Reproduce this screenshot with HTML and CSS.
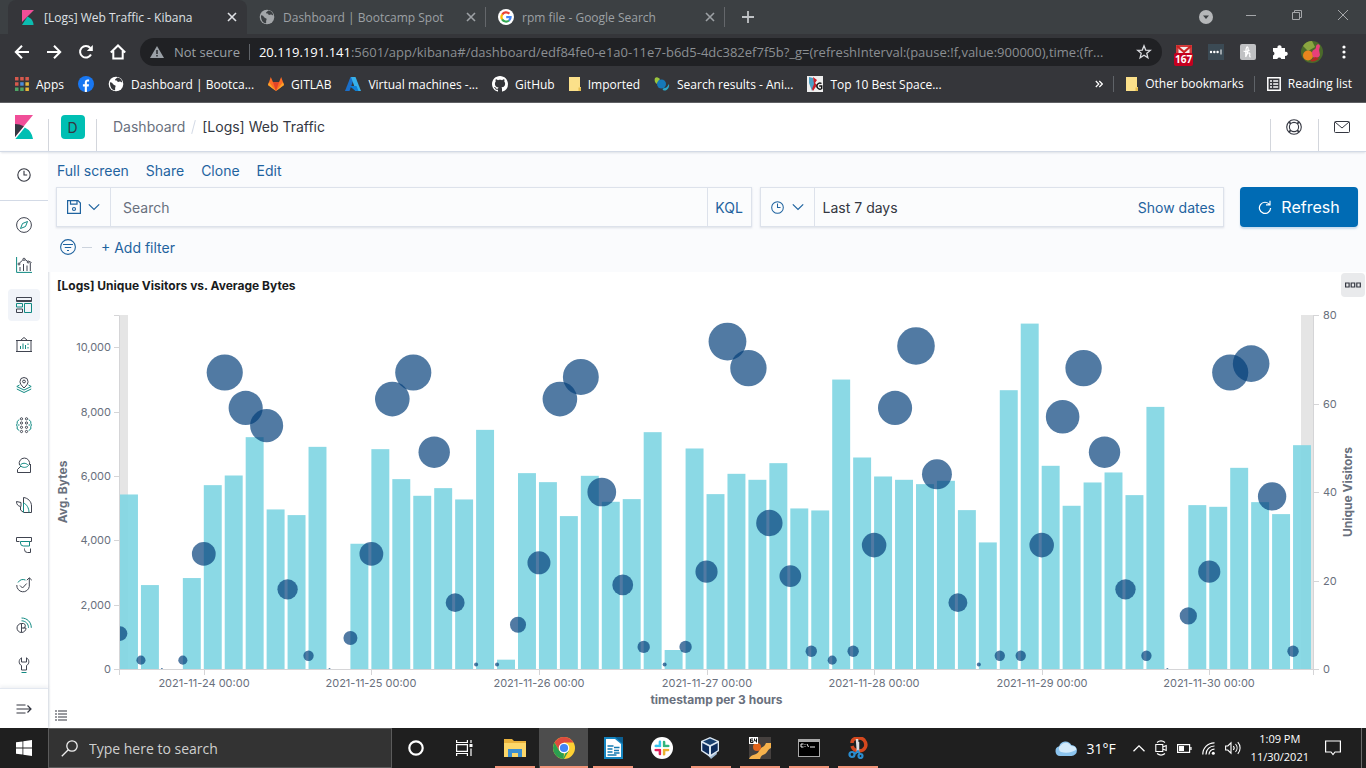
FILE: index.html
```html
<!DOCTYPE html>
<html lang="en">
<head>
<meta charset="utf-8">
<title>[Logs] Web Traffic - Kibana</title>
<link rel="stylesheet" href="styles.css">
</head>
<body>
<svg class="defs" aria-hidden="true">
  <symbol id="i-globe" viewBox="0 0 16 16"><circle cx="8" cy="8" r="7.3" fill="currentColor"/><path class="cut" d="M2 6.2c1.8.2 2.6.8 3 1.8.4 1 1.6 1 2.3 1.6.8.8-.2 1.700-.2 3 0 .8.3 1.300-.3 1.700C3.500 13.700 1.800 10.500 2 6.200zM9.300 1.600c-.5 1-1.800 1-2.200 2-.3.9.6 1.100 1.500 1 .7 0 .5 1.200 1.300 1.300 1 .1 1.300-.6 2.300-.4.9.2 1.200.9 1.900 1.100.2-2.500-2-4.800-4.800-5z"/></symbol>
  <symbol id="i-close" viewBox="0 0 10 10"><path d="M1 1l8 8M9 1L1 9" stroke="currentColor" stroke-width="1.600" fill="none"/></symbol>
  <symbol id="i-folder" viewBox="0 0 12 14"><path d="M0 0h11v10h1v4H0z" fill="#fbe08a"/><path d="M9.500 14v-3.500H12V14z" fill="#e5bd4f"/></symbol>
  <symbol id="i-chev" viewBox="0 0 12 8"><path d="M.8 1.300L6 6.500l5.200-5.200" fill="none" stroke="currentColor" stroke-width="1.200"/></symbol>
  <symbol id="i-clock" viewBox="0 0 16 16"><g fill="none" stroke="currentColor" stroke-width="1.100"><circle cx="8" cy="8" r="6.200"/><path d="M8 3.800V8h3.200"/></g></symbol>
</svg>

<header class="browser">
  <div class="tabs">
    <div class="tab tab-on">
      <svg class="fav" viewBox="0 0 16 16"><path d="M2 1h12L2 13z" fill="#f04e98"/><path d="M2 16l5.500-8.500C11 9 13.500 12 13.500 16z" fill="#0cbcb0"/></svg>
      <button class="tab-name">[Logs] Web Traffic - Kibana</button>
      <button class="tab-x" aria-label="Close tab"><svg width="10" height="10"><use href="#i-close"/></svg></button>
    </div>
    <div class="tab">
      <svg class="fav strip-globe" width="16" height="16"><use href="#i-globe"/></svg>
      <button class="tab-name">Dashboard | Bootcamp Spot</button>
      <button class="tab-x" aria-label="Close tab"><svg width="10" height="10"><use href="#i-close"/></svg></button>
    </div>
    <div class="tab">
      <svg class="fav" viewBox="0 0 16 16"><circle cx="8" cy="8" r="8" fill="#fff"/><g fill="none" stroke-width="2.200"><path d="M4.200 5.600A4.600 4.600 0 0 1 11.300 4.700" stroke="#ea4335"/><path d="M4.200 10.500a4.600 4.600 0 0 1 0-5" stroke="#fbbc05"/><path d="M11 11.500a4.600 4.600 0 0 1-6.900-1.100" stroke="#34a853"/><path d="M8.200 8.100h4.400c0 1.500-.6 2.700-1.600 3.500" stroke="#4285f4"/></g></svg>
      <button class="tab-name">rpm file - Google Search</button>
      <button class="tab-x" aria-label="Close tab"><svg width="10" height="10"><use href="#i-close"/></svg></button>
    </div>
    <button class="tab-new" aria-label="New tab"><svg width="12" height="12" viewBox="0 0 12 12"><path d="M6 0v12M0 6h12" stroke="currentColor" stroke-width="1.800"/></svg></button>
    <div class="win">
      <button aria-label="Tab search"><svg width="14" height="14" viewBox="0 0 14 14"><circle cx="7" cy="7" r="7" fill="#b5b7b9"/><path d="M4 5.500h6L7 9z" fill="#3c4043"/></svg></button>
      <button class="win-b" aria-label="Minimize"><svg width="10" height="10" viewBox="0 0 10 10"><path d="M0 5.500h10" stroke="currentColor"/></svg></button>
      <button class="win-b" aria-label="Restore"><svg width="10" height="10" viewBox="0 0 10 10"><path d="M.5 2.500h7v7h-7zM2.500 2.500v-2h7v7h-2" fill="none" stroke="currentColor"/></svg></button>
      <button class="win-b" aria-label="Close"><svg width="10" height="10" viewBox="0 0 10 10"><path d="M0 0l10 10M10 0L0 10" stroke="currentColor"/></svg></button>
    </div>
  </div>

  <div class="toolbar">
    <div class="nav-btns">
      <button aria-label="Back"><svg width="16" height="16" viewBox="0 0 16 16"><path d="M15 8H2M8 1.800L1.800 8 8 14.200" fill="none" stroke="currentColor" stroke-width="2"/></svg></button>
      <button aria-label="Forward"><svg width="16" height="16" viewBox="0 0 16 16"><path d="M1 8h13M8 1.800L14.200 8 8 14.200" fill="none" stroke="currentColor" stroke-width="2"/></svg></button>
      <button aria-label="Reload"><svg width="16" height="16" viewBox="0 0 16 16"><path d="M13 10.500A5.800 5.800 0 1 1 12.300 4" fill="none" stroke="currentColor" stroke-width="2"/><path d="M14.800 1v6H8.800z" fill="currentColor"/></svg></button>
      <button aria-label="Home"><svg width="16" height="16" viewBox="0 0 16 16"><path d="M.8 8.500L8 1.500l7.200 7M3.300 7v7.500h9.400V7" fill="none" stroke="currentColor" stroke-width="2"/></svg></button>
    </div>
    <div class="omni">
      <svg width="14" height="12" viewBox="0 0 14 12"><path d="M7 0l7 12H0z" fill="#9aa0a6"/><path d="M7 4v4M7 9v1.500" stroke="#202124" stroke-width="1.400"/></svg>
      <span class="omni-sec">Not secure</span>
      <label class="omni-host" for="url">20.119.191.141</label>
      <input id="url" class="omni-url" value=":5601/app/kibana#/dashboard/edf84fe0-e1a0-11e7-b6d5-4dc382ef7f5b?_g=(refreshInterval:(pause:!f,value:900000),time:(fr...">
      <button aria-label="Bookmark this page"><svg width="16" height="16" viewBox="0 0 16 16"><path d="M8 1.800l1.700 4.300 4.600.3-3.500 2.900 1.100 4.500L8 11.300l-3.900 2.500 1.100-4.500L1.700 6.400l4.600-.3z" fill="none" stroke="#dadce0" stroke-width="1.300"/></svg></button>
    </div>
    <div class="exts">
      <button class="mail" aria-label="Mail checker"><svg width="16" height="16" viewBox="0 0 16 16"><path d="M0 1h16v13H0z" fill="#d23b3b"/><path d="M2.500 3h11v10h-11z" fill="#f3eeee"/><path d="M1 2l7 6 7-6" fill="none" stroke="#c22" stroke-width="2.200"/></svg><span class="mail-n">167</span></button>
      <button aria-label="Password manager"><svg width="16" height="16" viewBox="0 0 16 16"><path d="M0 0h16v16H0z" fill="#3b4a54"/><g fill="#fff"><circle cx="3" cy="8" r="1.200"/><circle cx="6.300" cy="8" r="1.200"/><circle cx="9.600" cy="8" r="1.200"/><path d="M12.500 5.500h1v5h-1z"/></g></svg></button>
      <button aria-label="Honey"><svg width="16" height="16" viewBox="0 0 16 16"><rect width="16" height="16" rx="2" fill="#c0c1c3"/><path d="M5.500 13c2-3 3.500-9.500 2-10S5.500 8 5.800 13c.5-3 3.400-5.500 4-3.500.3 1.300-.9 3.500.9 3.300M3.500 7c2 1 4.500.5 6-1" fill="none" stroke="#fff" stroke-width="1.200"/></svg></button>
      <button aria-label="Extensions"><svg width="16" height="16" viewBox="0 0 16 16"><path d="M1 4h4.500a2.100 2.100 0 1 1 4 0H13v3.800a2.100 2.100 0 1 1 0 4V15H9.300a2.100 2.100 0 0 0-4 0H1v-3.600a2.100 2.100 0 0 0 0-4z" fill="#fff"/></svg></button>
      <button aria-label="Profile"><svg width="22" height="22" viewBox="0 0 22 22"><circle cx="11" cy="11" r="11" fill="#4b6a2a"/><path d="M2 5a11 11 0 0 1 9-5l3 6-7 4z" fill="#8ba540"/><circle cx="7" cy="14.500" r="5" fill="#e8851e"/><path d="M11 12c0-4 4-3 4-6s3-4 4-1l-1 4 1 5c-1 3-5 4-7 2z" fill="#e8407a"/><path d="M9 20c3 1 7 0 9-3l-4-1z" fill="#b52a22"/></svg></button>
      <button aria-label="Menu"><svg width="4" height="16" viewBox="0 0 4 16"><g fill="#fff"><circle cx="2" cy="3" r="1.600"/><circle cx="2" cy="8" r="1.600"/><circle cx="2" cy="13" r="1.600"/></g></svg></button>
    </div>
  </div>

  <nav class="marks">
    <a href="#"><svg width="14" height="14" viewBox="0 0 14 14"><g><path d="M0 0h3.500v3.500H0zM5.200 0h3.500v3.500H5.200zM10.400 0h3.500v3.500h-3.500zM0 5.200h3.500v3.500H0z" fill="#d7594d"/><path d="M5.200 5.200h3.500v3.500H5.200z" fill="#4c8bd8"/><path d="M0 10.400h3.500v3.500H0zM5.200 10.400h3.500v3.500H5.200z" fill="#4fa566"/><path d="M10.400 5.200h3.500v3.500h-3.500zM10.400 10.400h3.500v3.500h-3.500z" fill="#e8b53a"/></g></svg>Apps</a>
    <a href="#" aria-label="Facebook"><svg width="16" height="16" viewBox="0 0 16 16"><circle cx="8" cy="8" r="8" fill="#1877f2"/><path d="M6.800 16v-5.500H4.900V8.200h1.900V6.500c0-2 1.200-3 2.900-3 .8 0 1.400.1 1.400.1v1.900h-1c-1 0-1.200.6-1.200 1.200v1.500H11l-.3 2.300H8.900V16z" fill="#fff"/></svg></a>
    <a href="#"><svg class="bar-globe" width="16" height="16"><use href="#i-globe"/></svg>Dashboard | Bootca...</a>
    <a href="#"><svg width="16" height="16" viewBox="0 0 16 16"><path d="M8 15L0 9l2.800-8L5 6.200h6L13.200 1 16 9z" fill="#fc6d26"/><path d="M8 15L5 6.200h6z" fill="#e24329"/><path d="M8 15L0 9l1-2.700z M8 15l8-6-1-2.700z" fill="#fca326"/></svg>GITLAB</a>
    <a href="#"><svg width="16" height="16" viewBox="0 0 16 16"><path d="M5.500 1h4L4.500 15H0z" fill="#1a6fc9"/><path d="M6 1h4.500L16 15h-5z" fill="#37b0ea"/><path d="M4.500 10h7l2 5h-3z" fill="#0f7fd6"/></svg>Virtual machines -...</a>
    <a href="#"><svg width="16" height="16" viewBox="0 0 16 16"><path fill="#fff" d="M8 0C3.580 0 0 3.580 0 8c0 3.540 2.290 6.530 5.470 7.590.4.070.55-.17.55-.38 0-.19-.01-.82-.01-1.490-2.010.37-2.530-.49-2.690-.94-.09-.23-.48-.94-.82-1.130-.28-.15-.68-.52-.01-.53.630-.01 1.080.58 1.230.82.720 1.210 1.870.87 2.330.66.070-.52.280-.87.510-1.070-1.780-.2-3.640-.89-3.640-3.950 0-.87.310-1.590.82-2.150-.08-.2-.36-1.020.08-2.120 0 0 .67-.21 2.200.82.640-.18 1.320-.27 2-.27s1.360.09 2 .27c1.530-1.040 2.200-.82 2.200-.82.440 1.100.16 1.920.08 2.120.51.560.82 1.270.82 2.150 0 3.070-1.870 3.750-3.650 3.950.29.250.54.730.54 1.480 0 1.070-.01 1.930-.01 2.200 0 .21.150.46.550.38A8.010 8.010 0 0 0 16 8c0-4.420-3.580-8-8-8z"/></svg>GitHub</a>
    <a href="#"><svg width="12" height="14"><use href="#i-folder"/></svg>Imported</a>
    <a href="#"><svg width="16" height="16" viewBox="0 0 16 16"><path d="M1 2c2-2 4 0 5 1L3 8C1 7 0 4 1 2z" fill="#9bc53d"/><circle cx="7.500" cy="8" r="4.500" fill="#1579b8"/><path d="M15 8c1 4-3 8-6 6-1-1 0-2 2-2s3-3 4-4z" fill="#2aa7c9"/></svg>Search results - Ani...</a>
    <a href="#"><svg width="16" height="16" viewBox="0 0 16 16"><path d="M0 0h16v16H0z" fill="#eee"/><path d="M2 1l4 1 2 6-3 7-3-8z" fill="#4c9fc4"/><path d="M6 1l4 3-2 3 2 2-4 6-1-2 2-5z" fill="#c8202b"/><path d="M14.500 7.500a3 3 0 1 0 .2 5V10h-2.500" fill="none" stroke="#111" stroke-width="1.400"/></svg>Top 10 Best Space...</a>
    <button class="more" aria-label="More bookmarks"><svg width="8" height="8" viewBox="0 0 8 8"><path d="M.8 1l3 3-3 3M4.300 1l3 3-3 3" fill="none" stroke="#fff" stroke-width="1.200"/></svg></button>
    <a class="cell" href="#"><svg width="12" height="14"><use href="#i-folder"/></svg>Other bookmarks</a>
    <a class="cell" href="#"><svg width="14" height="14" viewBox="0 0 14 14"><path d="M.8.800h12.400v12.400H.8zM3 4h2M6.200 4h5M3 7h2M6.200 7h5M3 10h2M6.200 10h5" fill="none" stroke="#fff" stroke-width="1.500"/></svg>Reading list</a>
  </nav>
</header>

<div class="kibana">
  <header class="top">
    <a class="logo" href="#" aria-label="Kibana home"><svg width="18" height="24" viewBox="0 0 18 24"><path d="M0 0v22L18 0z" fill="#f04e98"/><path d="M0 9v13L8.800 11.200A19 19 0 0 0 0 9z" fill="#343741"/><path d="M9.800 12.500L.4 24H18a15 15 0 0 0-8.200-11.500z" fill="#00bfb3"/></svg></a>
    <div class="space"><button class="space-b">D</button></div>
    <nav class="crumbs"><a href="#">Dashboard</a><span class="slash"></span><span class="here">[Logs] Web Traffic</span></nav>
    <button class="top-b" aria-label="Help"><svg width="16" height="16" viewBox="0 0 16 16"><g fill="none" stroke="currentColor" stroke-width="1.100"><circle cx="8" cy="8" r="7.300"/><circle cx="8" cy="8" r="4.600"/><path d="M2.500 3.500l2.300 1.300M3.500 2.500l1.300 2.300M13.500 3.500l-2.300 1.300M12.500 2.500l-1.300 2.300M2.500 12.500l2.300-1.300M3.500 13.500l1.300-2.300M13.500 12.500l-2.300-1.300M12.500 13.500l-1.300-2.300"/></g></svg></button>
    <button class="top-b" aria-label="Newsfeed"><svg width="16" height="12" viewBox="0 0 16 12"><path d="M1.500.5h13a1 1 0 0 1 1 1v9a1 1 0 0 1-1 1h-13a1 1 0 0 1-1-1v-9a1 1 0 0 1 1-1zM1 1l7 6 7-6" fill="none" stroke="currentColor"/></svg></button>
  </header>

  <div class="main">
    <nav class="side">
      <div class="side-top"><a class="it" href="#" aria-label="Recently viewed"><svg width="16" height="16"><use href="#i-clock"/></svg></a></div>
      <div class="side-list">
        <a class="it" href="#" aria-label="Discover"><svg viewBox="0 0 16 16"><circle cx="8" cy="8" r="7.400"/><path class="g" d="M11.500 4.500L9.500 9.500l-5 2 2-5z"/></svg></a>
        <a class="it" href="#" aria-label="Visualize"><svg viewBox="0 0 16 16"><path class="g" d="M.6 0v15.400H16"/><path d="M4 14v-4M7.500 14V7M11 14V8.500M14.300 14V6M3.500 6l3.300-3M9 2.500l2.500 1.800M13 4.500l2.500 1"/><circle cx="3" cy="7" r="1"/><circle cx="8" cy="2.300" r="1.100"/><circle cx="12.200" cy="5" r="1"/></svg></a>
        <a class="it it-on" href="#" aria-label="Dashboard"><svg viewBox="0 0 16 16"><path d="M.5.500h15v4H.5zM.5 3.500h15"/><path class="g" d="M8.500 6.500h7v9h-7zM.5 6.500h6v3.500h-6z"/><path d="M.5 12h6v3.500h-6z"/></svg></a>
        <a class="it" href="#" aria-label="Canvas"><svg viewBox="0 0 16 16"><path d="M0 3.500h16M1 3.500v11M15 3.500v11M0 14.500h16M4.500 3.500l3.500-3 3.500 3"/><path class="g" d="M4.500 12V9M7 12V6.500M9.500 12V8M12 6.500v1.500M12 10v1.500"/></svg></a>
        <a class="it" href="#" aria-label="Maps"><svg viewBox="0 0 16 16"><path d="M8 11C5 8 4 6.500 4 4.500a4 4 0 0 1 8 0C12 6.500 11 8 8 11z"/><circle cx="8" cy="4.500" r="1.400"/><path class="g" d="M3.500 8L.8 9.500 8 13l7.200-3.500L12.500 8M.8 12L8 15.500l7.200-3.500"/></svg></a>
        <a class="it" href="#" aria-label="Machine Learning"><svg viewBox="0 0 16 16"><circle cx="5.500" cy="1.800" r="1.100"/><circle cx="10.500" cy="1.800" r="1.100"/><circle cx="5.500" cy="6" r="1.100"/><circle cx="10.500" cy="6" r="1.100"/><circle cx="5.500" cy="10.300" r="1.100"/><circle cx="10.500" cy="10.300" r="1.100"/><circle cx="5.500" cy="14.500" r="1.100"/><circle cx="10.500" cy="14.500" r="1.100"/><path class="g" d="M3.300 2.500L1.200 4.500v2L.6 8l.6 1.500v2.500l2.100 1.500M12.700 2.500l2.100 2v2l.6 1.500-.6 1.500v2.500l-2.100 1.500M2 8h1.500M12.500 8H14"/></svg></a>
        <a class="it" href="#" aria-label="Metrics"><svg viewBox="0 0 16 16"><path d="M3.500 8a5.200 5.200 0 1 1 9.800 0M14.500 7v8.500h-13v-3L5 9"/><path class="g" d="M4 8.500c2-3 6-3 8.500 0-2 2.500-6 2.500-8.500 0z"/></svg></a>
        <a class="it" href="#" aria-label="Logs"><svg viewBox="0 0 16 16"><path d="M7.500 6V.5c4.500.5 8 4 8 8.500v6.500h-8"/><path class="g" d="M7.500 15.500V6c3 1 5.500 5 5.500 9.500"/><path d="M5 5.500L.5 4.500c0 3 1.500 4.500 4 5V13l2.500 2M5 9.500v-4"/></svg></a>
        <a class="it" href="#" aria-label="APM"><svg viewBox="0 0 16 16"><path d="M3.500 4.500h-3v-4h15v4h-2"/><path class="g" d="M4.500 4.500h9v4.500h-6a3 3 0 0 1-3-3z"/><path d="M8.500 11.500v1a3 3 0 0 0 3 3h3v-4"/></svg></a>
        <a class="it" href="#" aria-label="Uptime"><svg viewBox="0 0 16 16"><path class="g" d="M2 5.500A6.300 6.300 0 0 1 9.500 3"/><path d="M.8 8a6.300 6.300 0 0 0 12.500 1.500V1M10.800 3.200L13.300.8l2.500 2.400M4 8.500l2.500 2.500 4.200-4.500"/></svg></a>
        <a class="it" href="#" aria-label="SIEM"><svg viewBox="0 0 16 16"><path d="M5.500 6.500a4.500 4.500 0 1 0 4.500 4.500H5.500zM5.500 6.500h2a2.300 2.300 0 0 1 0 4.500M5.500 11v4.500"/><path class="g" d="M5.500 3.800c4 0 7 3 7 7M5.500 1c5.500 0 9.800 4 9.800 9.800"/></svg></a>
        <a class="it" href="#" aria-label="Dev Tools"><svg viewBox="0 0 16 16"><path d="M5.500.800C2.500 2.500 2.300 7 5.500 8.500V13h5V8.500c3.200-1.500 3-6 0-7.700V5h-5z"/><path class="g" d="M5.500 15.500h5"/></svg></a>
      </div>
      <button class="side-end" aria-label="Expand"><svg width="16" height="10" viewBox="0 0 16 10"><path d="M.5 1h9M.5 5h14.500M.5 9h9M11.500 1.500L15 5l-3.500 3.500" fill="none" stroke="#343741" stroke-width="1.200"/></svg></button>
    </nav>

    <main class="app">
      <div class="query">
        <nav class="menu"><a href="#">Full screen</a><a href="#">Share</a><a href="#">Clone</a><a href="#">Edit</a></nav>
        <div class="bar">
          <div class="box box-q">
            <button class="pick" aria-label="Saved queries"><svg width="14" height="14" viewBox="0 0 14 14"><path d="M.6.600h10.400l2.400 2.400v10.400H.6zM3.500.600v3.600h6.500V.6" fill="none" stroke="currentColor" stroke-width="1.200"/><circle cx="7" cy="9" r="1.500" fill="none" stroke="currentColor" stroke-width="1.200"/></svg><svg width="12" height="8"><use href="#i-chev"/></svg></button>
            <input class="q" placeholder="Search" aria-label="Search">
            <button class="kql">KQL</button>
          </div>
          <div class="box box-t">
            <button class="pick" aria-label="Quick time ranges"><svg width="15" height="15"><use href="#i-clock"/></svg><svg width="12" height="8"><use href="#i-chev"/></svg></button>
            <button class="range">Last 7 days<span>Show dates</span></button>
          </div>
          <button class="go"><svg width="14" height="14" viewBox="0 0 14 14"><path d="M11.500 4.500A5.600 5.600 0 1 0 12.600 8M12 .8v4H8" fill="none" stroke="#fff" stroke-width="1.200"/></svg>Refresh</button>
        </div>
        <div class="filters"><button aria-label="Filter options"><svg width="16" height="16" viewBox="0 0 16 16"><g fill="none" stroke="currentColor" stroke-width="1.100"><circle cx="8" cy="8" r="7.400"/><path d="M3 5.500h10M4.800 8.500h6.400M7 11.500h2"/></g></svg></button><i class="dash"></i><button>+ Add filter</button></div>
      </div>
      <section class="panel">
        <div class="panel-h"><h2>[Logs] Unique Visitors vs. Average Bytes</h2><button class="opts" aria-label="Panel options"><svg width="16" height="6" viewBox="0 0 16 6"><path d="M.6 1h3.500v4H.6zM6.200 1h3.500v4H6.200zM11.800 1h3.500v4h-3.500z" fill="none" stroke="#343741" stroke-width="1.200"/></svg></button></div>
        <div class="chart" id="chart"></div>
        <button class="legend" aria-label="Toggle legend"><svg width="12" height="11" viewBox="0 0 12 11"><path d="M0 1h2M3 1h9M0 4h2M3 4h9M0 7h2M3 7h9M0 10h2M3 10h9" stroke="#343741" stroke-width="1.200"/></svg></button>
      </section>
    </main>
  </div>
</div>

<footer class="task">
  <button class="start" aria-label="Start"><svg width="16" height="16" viewBox="0 0 16 16"><path d="M0 2.300l6.500-.9v6.200H0zM7.300 1.300L16 0v7.600H7.300zM0 8.400h6.500v6.200L0 13.700zM7.300 8.400H16V16l-8.700-1.300z" fill="#fff"/></svg></button>
  <label class="find"><svg width="17" height="17" viewBox="0 0 17 17"><g fill="none" stroke="#eee" stroke-width="1.300"><circle cx="11" cy="6" r="5.200"/><path d="M7.300 9.700L.8 16.200"/></g></svg><input placeholder="Type here to search" aria-label="Type here to search"></label>
  <button class="sys" aria-label="Cortana"><svg width="16" height="16" viewBox="0 0 16 16"><circle cx="8" cy="8" r="6.700" fill="none" stroke="#fff" stroke-width="2.200"/></svg></button>
  <button class="sys" aria-label="Task view"><svg width="17" height="16" viewBox="0 0 17 16"><path d="M.6 0v2.500h10.800V0M.6 16v-2.500h10.800V16M.6 4.600h10.800v6.800H.6zM15 0v3M15 8.500V16" fill="none" stroke="#fff" stroke-width="1.200"/><path d="M13.500 4h3v3h-3z" fill="#fff"/></svg></button>
  <div class="apps">
    <button class="run" aria-label="File Explorer"><svg viewBox="0 0 22 22"><path d="M0 2h8l2 2h12v16H0z" fill="#e9b23c"/><path d="M0 6h22v14H0z" fill="#fcd769"/><path d="M4 20v-8h14v8h-4v-4H8v4z" fill="#3c8fd0"/></svg></button>
    <button class="run cur" aria-label="Chrome"><svg viewBox="0 0 22 22"><circle cx="11" cy="11" r="11" fill="#fdd033"/><path d="M1.500 5.500A11 11 0 0 1 20.500 5.500H11L6.200 13.700z" fill="#dd4b3e"/><path d="M1.500 5.500l4.700 8.200L11 16.500l-.5 5.500A11 11 0 0 1 1.500 5.500z" fill="#2b9e50"/><path d="M15.800 13.700L11 22H10l3-7z" fill="#2b9e50"/><circle cx="11" cy="11" r="5.300" fill="#fff"/><circle cx="11" cy="11" r="4.100" fill="#4285f4"/></svg></button>
    <button class="run" aria-label="LibreOffice Writer"><svg viewBox="0 0 22 22"><path d="M2 0h12l7 6v16H2z" fill="#1686c1"/><path d="M4 2h9l6 5v13H4z" fill="#fff"/><path d="M13 0h8v7z" fill="#0c5f92"/><path d="M5.500 9h6M5.500 12h5M5.500 15h5M5.500 18h9M12 10.500h5.500M12 13.500h5M12 16h5.500" stroke="#1279b1" stroke-width="1.500"/></svg></button>
    <button aria-label="Slack"><svg viewBox="0 0 22 22"><circle cx="11" cy="11" r="11" fill="#fff"/><g fill="none" stroke-width="2.700" stroke-linecap="round"><path d="M9 4.800v4.200M5 9h.5" stroke="#36c5f0"/><path d="M5 9h4" stroke="#36c5f0"/><path d="M13 9h4.200M13 5v4" stroke="#2eb67d"/><path d="M13 13v4.200M13 13h4" stroke="#ecb22e"/><path d="M9 13H4.800M9 13v4" stroke="#e01e5a"/></g><path d="M11 3v16M3 11h16" stroke="#fff" stroke-width="1.200"/></svg></button>
    <button class="run" aria-label="VirtualBox"><svg viewBox="0 0 22 22"><path d="M6 16l5 6 6-5-1-3z" fill="#9fb9d2"/><path d="M10 0l9 4v10l-9 6-9-6V4z" fill="#dce7f2"/><path d="M10 1.500L17 4.500 10 8 3 4.500z" fill="#173f6e"/><path d="M2.300 6L9 9.500v8L2.300 13.300zM17.700 6L11 9.500v8l6.700-4.200z" fill="#0d2d5c"/></svg></button>
    <button class="run" aria-label="Launcher"><svg viewBox="0 0 22 22"><path d="M0 0h22v22H0z" fill="#45403e"/><path d="M0 22c2-6 8-3 10-8s5-3 7-8h5v5c-3 1-4 5-6 6s-4 1-5 5z" fill="#f6b24c"/><circle cx="8" cy="10" r="4" fill="#e2641c"/><path d="M0 0h9v7H0z" fill="#fff"/><path d="M4 2H1.500v3.500H4V3.800H1.500M5.500 1.500v2.300H8M7.500 1.500v4" fill="none" stroke="#111"/></svg></button>
    <button class="run" aria-label="Command Prompt"><svg viewBox="0 0 22 22"><path d="M0 2h22v18H0z" fill="#a9a9a9"/><path d="M1 5h20v14H1z" fill="#000"/><path d="M5.500 7H3v3h2.500M7 7v.8M7 9.200v.8M9 7l1.500 3M12 10h5" fill="none" stroke="#eee"/></svg></button>
    <button class="run" aria-label="Snipping Tool"><svg viewBox="0 0 22 22"><path d="M5 6C5 0 14 0 17 3c4 5 1 11-5 11-3 0-6-2-7-5" fill="none" stroke="#d4481e" stroke-width="3.500"/><path d="M10 2l1 13M11 5v11" stroke="#ddd" stroke-width="2.500"/><path d="M8 17l3-3 2 3" fill="none" stroke="#2a8dd0" stroke-width="2"/><g fill="none" stroke="#2a8dd0" stroke-width="2.200"><circle cx="5" cy="17.500" r="2.500"/><circle cx="13.500" cy="19" r="2"/></g></svg></button>
  </div>
  <div class="tray">
    <button class="wx"><svg width="22" height="16" viewBox="0 0 22 16"><path d="M5 16a5 5 0 0 1-.8-9.800A6.500 6.500 0 0 1 16.300 5 5.500 5.500 0 0 1 16.500 16z" fill="#8cc4ee"/><path d="M6 12a4 4 0 0 1 0-7 6 6 0 0 1 10 1c3 0 5 1 5.500 3.500C18 12 12 14 6 12z" fill="#d4ebfb"/></svg>31°F</button>
    <button aria-label="Hidden icons"><svg width="12" height="7" viewBox="0 0 12 7"><path d="M.5 6.300L6 .9l5.500 5.400" fill="none" stroke="#fff" stroke-width="1.300"/></svg></button>
    <button aria-label="Meet Now"><svg width="12" height="16" viewBox="0 0 12 16"><path d="M.8 4.500h7v7h-7zM7.800 7l3.400-1.500v5L7.800 9M2 2.500c2.500-2 5.500-2 8 0M2 13.500c2.500 2 5.500 2 8 0" fill="none" stroke="#fff" stroke-width="1.100"/></svg></button>
    <button aria-label="Battery"><svg width="15" height="9" viewBox="0 0 15 9"><path d="M.6.600h12v7.800H.6zM14 3v3" fill="none" stroke="#fff" stroke-width="1.200"/><path d="M2 2h5v5H2z" fill="#fff"/></svg></button>
    <button aria-label="Network"><svg width="13" height="13" viewBox="0 0 13 13"><g fill="none" stroke="#fff" stroke-width="1.200"><path d="M.8 12.500A11.500 11.500 0 0 1 12.500.8M4 12.500A8.300 8.300 0 0 1 12.500 4M7 12.500a5.400 5.400 0 0 1 5.500-5.400"/></g><circle cx="11.300" cy="11.300" r="1.500" fill="#fff"/></svg></button>
    <button aria-label="Volume"><svg width="16" height="14" viewBox="0 0 16 14"><path d="M.6 5h2.200L6 1.800v10.400L2.800 9H.6zM8.300 5a3 3 0 0 1 0 4M10.500 3a6 6 0 0 1 0 8M12.800 1.200a8.500 8.500 0 0 1 0 11.600" fill="none" stroke="#fff" stroke-width="1.100"/></svg></button>
    <button class="when"><span>1:09 PM</span><span>11/30/2021</span></button>
    <button class="note" aria-label="Notifications"><svg width="16" height="16" viewBox="0 0 16 16"><path d="M.6 1h14.800v11H10l-2 2.500L6 12H.6z" fill="none" stroke="#fff" stroke-width="1.200"/></svg></button>
    <button class="peek" aria-label="Show desktop"></button>
  </div>
</footer>
<script src="chart.js"></script>
</body>
</html>
```
FILE: styles.css
```css
* { box-sizing: border-box; }
body {
  margin: 0;
  min-height: 100vh;
  display: flex;
  flex-direction: column;
  font-family: Inter, "Liberation Sans", sans-serif;
  font-size: 14px;
  color: #343741;
  background: #fff;
}
button, input { font: inherit; color: inherit; background: none; border: 0; padding: 0; margin: 0; }
button { display: flex; align-items: center; justify-content: center; }
input { min-width: 0; outline: 0; }
a { color: inherit; text-decoration: none; }
svg { flex: none; display: block; }
.defs { position: absolute; width: 0; height: 0; }

/* browser chrome */
.browser { background: #35363a; color: #e8eaed; font-family: "Open Sans", "Noto Sans", sans-serif; font-size: 12px; border-bottom: 1px solid #5f6064; }
.tabs { display: flex; height: 34px; background: #3c4043; padding-left: 8px; }
.tab { flex: 0 1 239px; display: flex; align-items: center; padding: 0 10px 0 12px; color: #9da1a5; }
.tab-on { background: #35363a; color: #dfe1e5; border-radius: 8px 8px 0 0; }
.tab:not(.tab-on) { background: linear-gradient(#64676b, #64676b) right center / 1px 20px no-repeat; }
.fav { width: 16px; height: 16px; }
.tab-name { flex: 1; justify-content: flex-start; padding-left: 8px; white-space: nowrap; overflow: hidden; }
.strip-globe { color: #a3a6a9; --hole: #3c4043; }
.bar-globe { color: #fff; --hole: #35363a; }
.cut { fill: var(--hole); }
.tab-new { width: 46px; color: #c0c3c6; }
.win { margin-left: auto; display: flex; }
.win button { width: 44px; }
.win .win-b { width: 46px; height: 29px; color: #a5a7aa; }

.toolbar { display: flex; align-items: center; height: 36px; font-size: 13px; }
.nav-btns { display: flex; gap: 16px; padding: 0 14px; color: #fff; }
.omni { flex: 1; min-width: 0; height: 28px; display: flex; align-items: center; background: #202124; border-radius: 14px; padding: 0 10px; color: #9aa0a6; }
.omni-sec { margin: 0 9px 0 10px; padding-right: 9px; border-right: 1px solid #5f6368; line-height: 16px; }
.omni-host { color: #fff; }
.omni-url { flex: 1; color: #8b8f93; }
.exts { display: flex; align-items: center; padding: 0 6px; }
.exts button { width: 32px; }
.mail { position: relative; }
.mail-n { position: absolute; top: 9px; left: 6px; padding: 0 1px; border-radius: 2px; background: #c5001f; color: #fff; font-size: 10px; font-weight: 700; line-height: 13px; }

.marks { display: flex; align-items: center; height: 32px; padding-left: 15px; padding-bottom: 4px; color: #fff; white-space: nowrap; gap: 14px; }
.marks a { display: flex; align-items: center; gap: 7px; }
.more { margin-left: auto; }
.marks .cell { border-left: 1px solid #5f6368; padding-left: 12px; margin-left: -4px; line-height: 16px; }
.marks .cell:last-child { padding-right: 14px; }

/* kibana */
.kibana { flex: 1; display: flex; flex-direction: column; }
.top { position: relative; z-index: 1; display: flex; height: 49px; border-bottom: 1px solid #d3dae6; box-shadow: 0 2px 2px -1px rgba(152, 162, 179, .3); }
.logo, .space { width: 48px; display: flex; align-items: center; justify-content: center; }
.space, .crumbs, .top-b { background: linear-gradient(#d3d6dc, #d3d6dc) left bottom / 1px 32px no-repeat; }
.space { padding-left: 1px; }
.space-b { width: 24px; height: 24px; border-radius: 4px; background: #00bfb3; }
.crumbs { flex: 1; display: flex; align-items: center; padding: 0 0 1px 17px; color: #69707d; }
.slash { width: 1px; height: 14px; margin: 0 8px; background: #d3dae6; transform: rotate(15deg); }
.here { color: #343741; }
.top-b { width: 48px; color: #343741; }
.main { flex: 1; display: flex; }
.side { width: 48px; display: flex; flex-direction: column; box-shadow: 1px 0 2px rgba(152, 162, 179, .4); }
.side-top { height: 49px; padding: 7px 8px; border-bottom: 1px solid #d3dae6; }
.side-list { flex: 1; display: flex; flex-direction: column; gap: 8px; padding: 8px 8px 6px; }
.it { height: 32px; display: flex; align-items: center; justify-content: center; border-radius: 4px; }
.side-list svg { width: 16px; height: 16px; fill: none; stroke: #404450; stroke-width: 1; overflow: visible; }
.side-list .g { stroke: #118a83; }
.it-on { background: #f1f4f9; }
.side-end { height: 40px; border-top: 1px solid #e3e8f0; box-shadow: 0 -2px 3px rgba(152, 162, 179, .15); }
.app { flex: 1; min-width: 0; display: flex; flex-direction: column; }
.query { background: #fafbfd; padding: 0 8px; color: #1f639f; }
.menu { display: flex; align-items: center; gap: 17px; height: 35px; padding: 2px 1px 0; }
.bar { display: flex; gap: 8px; height: 40px; }
.box { display: flex; min-width: 0; border: 1px solid #dde2eb; box-shadow: 0 1px 2px rgba(152, 162, 179, .3); background: #fbfcfd; }
.box-q { flex: 3 1 0; }
.box-t { flex: 2 1 0; }
.pick { width: 54px; gap: 7px; border-right: 1px solid #dde2eb; }
.q { flex: 1; padding: 0 12px; }
.q::placeholder { color: #69707d; opacity: 1; }
.kql { width: 44px; border-left: 1px solid #dde2eb; }
.range { flex: 1; justify-content: space-between; padding: 0 8px; color: #343741; }
.range span { color: #1f639f; }
.go { width: 118px; margin-left: 8px; gap: 9px; border-radius: 4px; background: #006bb4; color: #fff; font-size: 16px; box-shadow: 0 2px 2px rgba(0, 107, 180, .2); }
.filters { display: flex; align-items: center; height: 45px; padding: 0 4px 5px; }
.dash { width: 10px; height: 1px; margin: 0 9px 0 6px; background: #ccd3dd; }

.panel { flex: 1; display: flex; flex-direction: column; padding-bottom: 7px; }
.panel-h { display: flex; align-items: center; justify-content: space-between; height: 26px; padding: 0 1px 0 9px; }
.panel h2 { margin: 0; font-size: 12px; font-weight: 700; color: #1a1c21; }
.opts { width: 24px; height: 24px; border-radius: 4px; background: #e9eaec; }
.chart { flex: 1; min-height: 240px; position: relative; }
.chart svg { position: absolute; width: 100%; height: 100%; font-size: 12px; }
.chart text { fill: #69707d; }
.chart .name { font-weight: 700; text-anchor: middle; }
.chart .mid { text-anchor: middle; }
.chart .end { text-anchor: end; }
.chart .tick { font-size: 11px; }
.axis { stroke: #d5d5d7; fill: none; }
.column { fill: #8bd9e5; }
.zone { fill: rgba(0, 0, 0, .1); }
.zone-over { fill: rgba(0, 60, 90, .01); }
.bubble { fill: rgba(3, 62, 121, .69); }
.legend { width: 26px; height: 12px; }

/* taskbar */
.task { display: flex; height: 40px; background: #1f1f1f; color: #fff; font-family: "Open Sans", "Noto Sans", sans-serif; }
.start { width: 48px; }
.find { width: 344px; display: flex; align-items: center; gap: 11px; padding-left: 12px; background: #333; border: 1px solid #5b5b5b; font-size: 14px; }
.find input { flex: 1; }
.find input::placeholder { color: #cfcfcf; opacity: 1; }
.sys { width: 48px; }
.apps { display: flex; margin-left: 2px; }
.apps button { width: 49px; }
.apps svg { width: 22px; height: 22px; }
.apps .run { background: linear-gradient(#f2957a, #f2957a) center bottom / 40px 2px no-repeat; }
.apps .cur { background: linear-gradient(#f2957a, #f2957a) center bottom / 48px 2px no-repeat, #4d4d4d; }
.tray { margin-left: auto; display: flex; align-items: center; gap: 10px; }
.wx { gap: 9px; font-size: 14px; margin-right: 7px; }
.when { flex-direction: column; font-size: 11px; line-height: 18px; }
.note { margin: 0 10px 0 6px; }
.peek { width: 5px; height: 40px; border-left: 1px solid #6b6b6b; }
```
FILE: chart.js
```js
// Average bytes and unique visitors, one value for each three-hour bucket.
const bytes = [5423, 2608, 0, 2826, 5713, 6013, 7204, 4958, 4782, 6903, 0, 3892, 6831, 5900, 5382, 5620, 5268, 7431, 290,
  6086, 5806, 4751, 6003, 5196, 5279, 7359, 590, 6852, 5434, 6065, 5879, 6396, 4989, 4927, 8994, 6572, 5982, 5879, 5744,
  5848, 4937, 3933, 8663, 10733, 6314, 5072, 5796, 6107, 5403, 8145, 0, 5092, 5040, 6251, 5185, 4813, 6955];
const visitors = [8, 2, 0, 2, 26, 67, 59, 55, 18, 3, 0, 7, 26, 61, 67, 49, 15, 1, 1, 10, 24, 61, 66, 40, 19, 5, 1, 5, 22,
  74, 68, 33, 21, 4, 2, 4, 28, 59, 73, 44, 15, 1, 3, 3, 28, 57, 68, 49, 18, 3, 0, 12, 22, 67, 69, 39, 4];
const host = document.getElementById("chart");

function draw() {
  const w = host.clientWidth, h = host.clientHeight;
  const left = 72, right = w - 53, top = 17, bottom = h - 40;
  const step = (right - left + 1) / 57, tall = bottom - top;
  const yb = v => bottom - v / 11000 * tall;
  const yv = v => bottom - v / 80 * tall;
  let s = `<clipPath id="plot"><rect x="${left}" y="0" width="${right - left}" height="${bottom}"/></clipPath>`;
  s += `<rect class="zone" x="${left}" y="${top}" width="8" height="${tall}"/>`;
  s += `<rect class="zone" x="${right - 12}" y="${top}" width="12" height="${tall}"/>`;
  bytes.forEach((v, i) => {
    if (v) s += `<rect class="column" x="${left + i * step}" y="${yb(v)}" width="${step - 3}" height="${bottom - yb(v)}"/>`;
  });
  s += `<rect class="zone-over" x="${left}" y="${yb(bytes[0])}" width="8" height="${bottom - yb(bytes[0])}"/>`;
  s += `<rect class="zone-over" x="${right - 12}" y="${yb(bytes[56])}" width="9" height="${bottom - yb(bytes[56])}"/>`;
  s += `<path class="axis" d="M${left - 6} ${top}.5H${left - .5}V${bottom + 6}M${right + 6} ${top}.5H${right + .5}V${bottom + 6}M${left - 6} ${bottom + .5}H${right + 6}"/>`;
  for (let v = 0; v <= 10000; v += 2000) {
    const y = Math.round(yb(v));
    s += `<path class="axis" d="M${left - 6} ${y + .5}h6"/><text class="end tick" x="${left - 9}" y="${y + 4}">${v.toLocaleString("en-US")}</text>`;
  }
  for (let v = 0; v <= 80; v += 20) {
    const y = Math.round(yv(v));
    s += `<path class="axis" d="M${right} ${y + .5}h6"/><text class="tick" x="${right + 10}" y="${y + 4}">${v}</text>`;
  }
  for (let d = 0; d < 7; d++) {
    const x = Math.round(left + (4 + d * 8) * step);
    s += `<path class="axis" d="M${x + .5} ${bottom}v6"/><text class="mid tick" x="${x}" y="${bottom + 18}">2021-11-${24 + d} 00:00</text>`;
  }
  s += `<g clip-path="url(#plot)">`;
  visitors.forEach((v, i) => {
    const r = v < 2 ? v + 1 : 1.7 + 2 * Math.sqrt(v);
    s += `<circle class="bubble" cx="${left + i * step}" cy="${yv(v)}" r="${r}"/>`;
  });
  const mid = (top + bottom) / 2;
  s += `</g><text class="name" x="${(left + right) / 2}" y="${bottom + 35}">timestamp per 3 hours</text>`;
  s += `<text class="name" transform="translate(19 ${mid}) rotate(-90)">Avg. Bytes</text>`;
  s += `<text class="name" transform="translate(${w - 14} ${mid}) rotate(-90)">Unique Visitors</text>`;
  host.innerHTML = `<svg role="img" aria-label="Average bytes and unique visitors">${s}</svg>`;
}
draw();
window.addEventListener("resize", draw);
```
